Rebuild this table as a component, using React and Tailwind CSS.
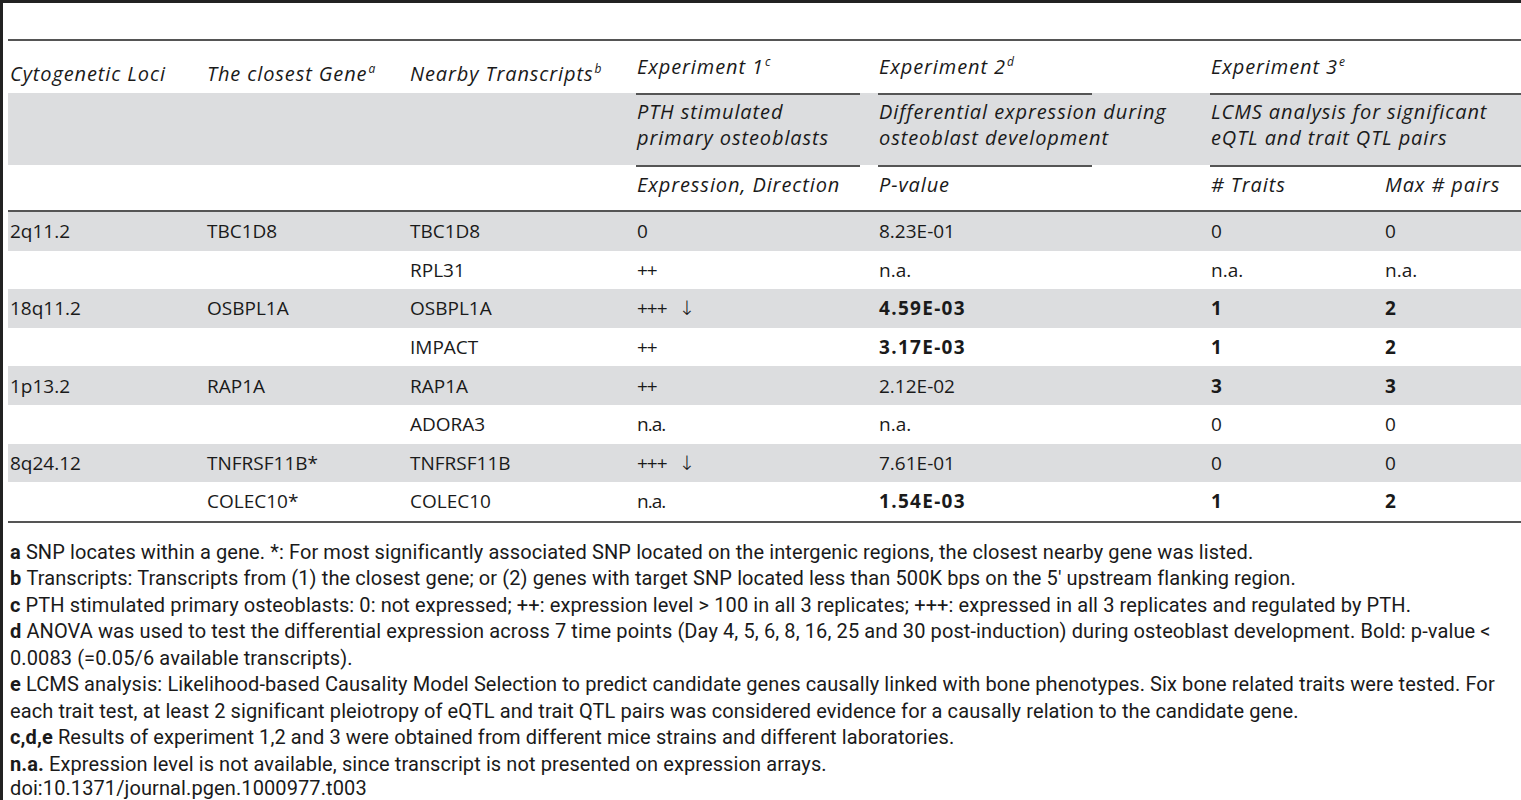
const rows = [
  { loci: '2q11.2', gene: 'TBC1D8', tr: 'TBC1D8', exp: '0', p: '8.23E-01', t: '0', m: '0' },
  { loci: '', gene: '', tr: 'RPL31', exp: '++', p: 'n.a.', t: 'n.a.', m: 'n.a.' },
  { loci: '18q11.2', gene: 'OSBPL1A', tr: 'OSBPL1A', exp: '+++', arrow: true, p: '4.59E-03', t: '1', m: '2', bp: true, bt: true },
  { loci: '', gene: '', tr: 'IMPACT', exp: '++', p: '3.17E-03', t: '1', m: '2', bp: true, bt: true },
  { loci: '1p13.2', gene: 'RAP1A', tr: 'RAP1A', exp: '++', p: '2.12E-02', t: '3', m: '3', bt: true },
  { loci: '', gene: '', tr: 'ADORA3', exp: 'n.a.', p: 'n.a.', t: '0', m: '0' },
  { loci: '8q24.12', gene: 'TNFRSF11B*', tr: 'TNFRSF11B', exp: '+++', arrow: true, p: '7.61E-01', t: '0', m: '0' },
  { loci: '', gene: 'COLEC10*', tr: 'COLEC10', exp: 'n.a.', p: '1.54E-03', t: '1', m: '2', bp: true, bt: true },
];

const cols = 'grid grid-cols-[197px_203px_227px_242px_332px_174px_138px]';

function Sup({ children }) {
  return <sup className="text-[12px] -top-[8px] ml-[1px] tracking-normal">{children}</sup>;
}

function Foot({ b, children }) {
  return (
    <div className="h-[26.5px] leading-[26.5px] whitespace-nowrap">
      {b && <span className="font-bold">{b} </span>}
      {children}
    </div>
  );
}

export default function App() {
  return (
    <div className="w-[1521px] h-[800px] bg-white border-l-[3px] border-t-[3px] border-[#222] overflow-hidden text-[#1a1a1a]">
      <div className="pl-[5px] pt-[36px]">
        <div className="font-['Open_Sans',sans-serif] text-[19px] border-t-2 border-[#555]">
          {/* header row A */}
          <div className={`${cols} h-[52px] italic font-medium text-[20px] tracking-[0.9px] whitespace-nowrap`}>
            <div className="pl-[2px] pt-[21px] leading-[24px]">Cytogenetic Loci</div>
            <div className="pl-[2px] pt-[21px] leading-[24px]">The closest Gene<Sup>a</Sup></div>
            <div className="pl-[2px] pt-[21px] leading-[24px]">Nearby Transcripts<Sup>b</Sup></div>
            <div className="pl-[2px] pt-[14px] leading-[24px]">Experiment 1<Sup>c</Sup></div>
            <div className="pl-[2px] pt-[14px] leading-[24px]">Experiment 2<Sup>d</Sup></div>
            <div className="col-span-2 pl-[2px] pt-[14px] leading-[24px]">Experiment 3<Sup>e</Sup></div>
          </div>
          {/* header row B */}
          <div className={`${cols} h-[72px] bg-[#dcdddf] italic font-medium text-[20px] tracking-[0.9px] whitespace-nowrap`}>
            <div />
            <div />
            <div />
            <div className="pl-[1px]">
              <div className="w-[224px] border-t-2 border-[#555] pl-[1px] pt-[4px] leading-[26px]">PTH stimulated<br />primary osteoblasts</div>
            </div>
            <div className="pl-[1px]">
              <div className="w-[214px] border-t-2 border-[#555] pl-[1px] pt-[4px] leading-[26px]">Differential expression during<br />osteoblast development</div>
            </div>
            <div className="col-span-2 pl-[1px]">
              <div className="border-t-2 border-[#555] pl-[1px] pt-[4px] leading-[26px]">LCMS analysis for significant<br />eQTL and trait QTL pairs</div>
            </div>
          </div>
          {/* header row C */}
          <div className={`${cols} h-[45px] italic font-medium text-[20px] tracking-[0.9px] whitespace-nowrap`}>
            <div />
            <div />
            <div />
            <div className="pl-[1px]">
              <div className="w-[224px] border-t-2 border-[#555] pl-[1px] pt-[6px] leading-[24px]">Expression, Direction</div>
            </div>
            <div className="pl-[1px]">
              <div className="w-[214px] border-t-2 border-[#555] pl-[1px] pt-[6px] leading-[24px]">P-value</div>
            </div>
            <div className="pl-[1px]">
              <div className="border-t-2 border-[#555] pl-[1px] pt-[6px] leading-[24px]"># Traits</div>
            </div>
            <div>
              <div className="border-t-2 border-[#555] pl-[2px] pt-[6px] leading-[24px]">Max # pairs</div>
            </div>
          </div>
          {/* body */}
          <div className="border-t-2 border-[#555] border-b-2">
            {rows.map((r, i) => (
              <div key={i} className={`${cols} h-[38.6px] items-center leading-[24px] whitespace-nowrap ${i % 2 === 0 ? 'bg-[#dcdddf]' : ''}`}>
                <div className="pl-[2px]">{r.loci}</div>
                <div className="pl-[2px]">{r.gene}</div>
                <div className="pl-[2px]">{r.tr}</div>
                <div className="pl-[2px]">
                  <span className="tracking-[-1px]">{r.exp}</span>
                  {r.arrow && <span className="ml-[12px] font-['DejaVu_Sans',sans-serif] font-extralight text-[20px]">↓</span>}
                </div>
                <div className={`pl-[2px] ${r.bp ? 'font-bold tracking-[1.3px]' : ''}`}>{r.p}</div>
                <div className={`pl-[2px] ${r.bt ? 'font-bold' : ''}`}>{r.t}</div>
                <div className={`pl-[2px] ${r.bt ? 'font-bold' : ''}`}>{r.m}</div>
              </div>
            ))}
          </div>
        </div>
        {/* footnotes */}
        <div className="font-['Roboto',sans-serif] text-[20px] tracking-[0.1px] pl-[2px] pt-[16px]">
          <Foot b="a">SNP locates within a gene. *: For most significantly associated SNP located on the intergenic regions, the closest nearby gene was listed.</Foot>
          <Foot b="b">Transcripts: Transcripts from (1) the closest gene; or (2) genes with target SNP located less than 500K bps on the 5′ upstream flanking region.</Foot>
          <Foot b="c">PTH stimulated primary osteoblasts: 0: not expressed; ++: expression level &gt; 100 in all 3 replicates; +++: expressed in all 3 replicates and regulated by PTH.</Foot>
          <Foot b="d">ANOVA was used to test the differential expression across 7 time points (Day 4, 5, 6, 8, 16, 25 and 30 post-induction) during osteoblast development. Bold: p-value &lt;</Foot>
          <Foot>0.0083 (=0.05/6 available transcripts).</Foot>
          <Foot b="e">LCMS analysis: Likelihood-based Causality Model Selection to predict candidate genes causally linked with bone phenotypes. Six bone related traits were tested. For</Foot>
          <Foot>each trait test, at least 2 significant pleiotropy of eQTL and trait QTL pairs was considered evidence for a causally relation to the candidate gene.</Foot>
          <Foot b="c,d,e">Results of experiment 1,2 and 3 were obtained from different mice strains and different laboratories.</Foot>
          <Foot b="n.a.">Expression level is not available, since transcript is not presented on expression arrays.</Foot>
          <div className="leading-[22px] whitespace-nowrap">doi:10.1371/journal.pgen.1000977.t003</div>
        </div>
      </div>
    </div>
  );
}
